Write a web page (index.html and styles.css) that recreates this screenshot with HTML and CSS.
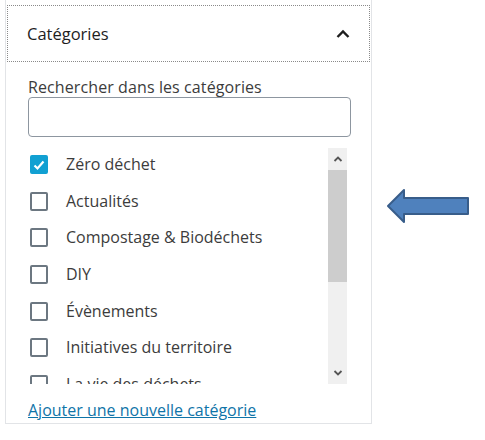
FILE: index.html
```html
<!DOCTYPE html>
<html lang="fr">
<head>
<meta charset="utf-8">
<link rel="stylesheet" href="styles.css">
</head>
<body>
<div class="page">
  <div class="panel">
    <div class="panel-header">
      <span class="panel-title">Catégories</span>
      <svg class="chev" width="16" height="16" viewBox="0 0 16 16"><polyline points="2.5,11 8,5.5 13.5,11" fill="none" stroke="#1e1e1e" stroke-width="2.4"/></svg>
    </div>
    <div class="panel-body">
      <label class="search-label">Rechercher dans les catégories</label>
      <div class="search-input"></div>
      <div class="list-wrap">
        <ul class="list">
          <li class="row"><span class="cb checked"><svg width="14" height="14" viewBox="0 0 14 14"><polyline points="2.5,7.5 5.5,10.5 11.5,3.5" fill="none" stroke="#fff" stroke-width="2.2"/></svg></span><span class="lbl">Zéro déchet</span></li>
          <li class="row"><span class="cb"></span><span class="lbl">Actualités</span></li>
          <li class="row"><span class="cb"></span><span class="lbl">Compostage &amp; Biodéchets</span></li>
          <li class="row"><span class="cb"></span><span class="lbl">DIY</span></li>
          <li class="row"><span class="cb"></span><span class="lbl">Évènements</span></li>
          <li class="row"><span class="cb"></span><span class="lbl">Initiatives du territoire</span></li>
          <li class="row"><span class="cb"></span><span class="lbl">La vie des déchets</span></li>
        </ul>
        <div class="scrollbar">
          <div class="sb-btn"><svg width="10" height="8" viewBox="0 0 10 8"><polyline points="1.5,6 5,2.5 8.5,6" fill="none" stroke="#555" stroke-width="1.8"/></svg></div>
          <div class="sb-thumb"></div>
          <div class="sb-track"></div>
          <div class="sb-btn"><svg width="10" height="8" viewBox="0 0 10 8"><polyline points="1.5,2 5,5.5 8.5,2" fill="none" stroke="#555" stroke-width="1.8"/></svg></div>
        </div>
      </div>
      <a class="add-link" href="#">Ajouter une nouvelle catégorie</a>
    </div>
  </div>
  <div class="pointer">
    <svg width="84" height="36" viewBox="386 188 84 36"><polygon points="388,206 404,190 404,198 468,198 468,214 404,214 404,222" fill="#4f81bd" stroke="#385d8a" stroke-width="2" stroke-linejoin="round"/></svg>
  </div>
</div>
</body>
</html>
```
FILE: styles.css
```css
* { box-sizing: border-box; }
html, body { margin: 0; padding: 0; background: #fff; }
body {
  font-family: "Open Sans", "Noto Sans", sans-serif;
  color: #1e1e1e;
}
.page {
  display: flex;
  align-items: flex-start;
  width: 485px;
  height: 440px;
}
.panel {
  margin-left: 5px;
  width: 367px;
  height: 424px;
  border-left: 1px solid #e2e4e7;
  border-right: 1px solid #e2e4e7;
  border-bottom: 1px solid #e2e4e7;
  padding-top: 5px;
  display: flex;
  flex-direction: column;
}
.panel-header {
  margin: 0 1px;
  height: 57px;
  border: 1px dotted #8a8a8a;
  display: flex;
  align-items: center;
  justify-content: space-between;
  padding: 0 18px 0 19px;
}
.panel-title {
  font-size: 16.5px;
  color: #1e1e1e;
}
.chev { display: block; }
.panel-body {
  padding: 15px 0 0 22px;
  display: flex;
  flex-direction: column;
}
.search-label {
  font-size: 16px;
  color: #3c3c3c;
  line-height: 20px;
  height: 20px;
  letter-spacing: 0.1px;
}
.search-input {
  margin-top: 0;
  width: 323px;
  height: 40px;
  border: 1px solid #8d96a0;
  border-radius: 4px;
}
.list-wrap {
  margin-top: 11px;
  display: flex;
  width: 321px;
  height: 236px;
}
.list {
  list-style: none;
  margin: 0;
  padding: 7px 0 0 2px;
  flex: 1;
  overflow: hidden;
}
.row {
  display: flex;
  align-items: flex-start;
  height: 36.7px;
}
.cb {
  width: 18px;
  height: 19px;
  border: 2px solid #6c7781;
  border-radius: 2px;
  display: flex;
  align-items: center;
  justify-content: center;
  flex: none;
}
.cb.checked {
  background: #11a0d2;
  border-color: #11a0d2;
}
.cb svg { display: block; }
.lbl {
  margin-left: 18px;
  font-size: 16px;
  line-height: 18px;
  color: #3c3c3c;
}
.scrollbar {
  width: 19px;
  margin-right: 2px;
  display: flex;
  flex-direction: column;
  background: #f0f0f0;
}
.sb-btn {
  height: 22px;
  display: flex;
  align-items: center;
  justify-content: center;
}
.sb-thumb {
  height: 112px;
  background: #cdcdcd;
}
.sb-track { flex: 1; }
.add-link {
  margin-top: 15px;
  font-size: 16px;
  color: #0f74a8;
  text-decoration: underline;
  align-self: flex-start;
}
.pointer {
  margin: 188px 0 0 14px;
}
.pointer svg { display: block; }
```
